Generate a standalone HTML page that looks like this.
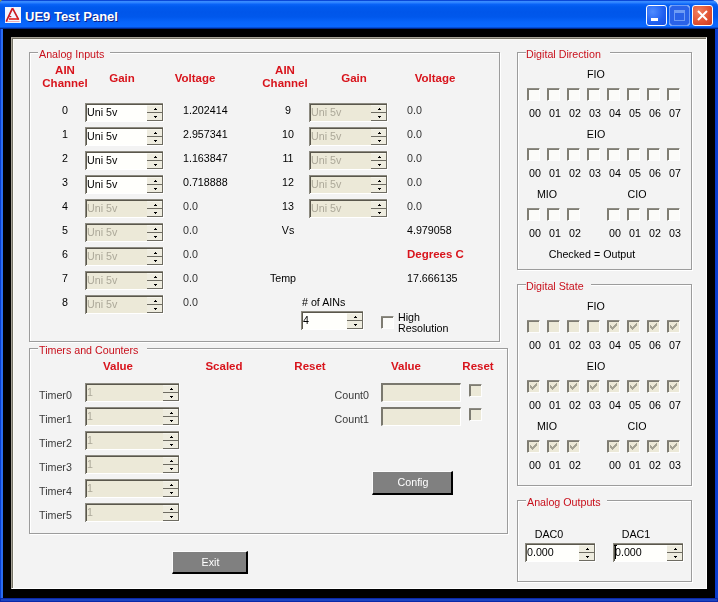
<!DOCTYPE html><html><head><meta charset="utf-8"><title>UE9 Test Panel</title><style>
*{margin:0;padding:0;box-sizing:border-box}
html,body{width:718px;height:602px;overflow:hidden;background:#e4e4f4}
body{position:relative;font-family:"Liberation Sans", sans-serif;font-size:10.7px;color:#000}
div{position:absolute;white-space:nowrap}
.t,.h,.gt,.sv,.btn{will-change:transform}

.t{line-height:13px}
.h{line-height:13px;font-weight:bold;font-size:11.5px;color:#d8141c}
.gt{line-height:13px;color:#c8101c;background:#f3f3f3;padding:0 1px}
.gg{border:1px solid #9c9c9c}
.gw{border:1px solid #ffffff}
.sp{background:#fff;border-top:1px solid #8a8a80;border-left:1px solid #8a8a80;border-bottom:1px solid #fff;border-right:1px solid #fff}
.sp::before{content:"";position:absolute;left:0;top:0;right:0;bottom:0;border-top:1px solid #555248;border-left:1px solid #555248;border-bottom:1px solid #e8e6dc}
.sp.dis{background:#ece9d8}
.sv{line-height:15px}
.sp.dis .sv{color:#aca899}
.su,.sd{right:0;background:#ecebdc;border-bottom:1px solid #6e6c62;border-right:1px solid #6e6c62}
.su{top:1px;height:8px}
.sd{top:9px;height:8px}
.au,.ad{position:absolute;left:6px;width:0;height:0;border-left:2px solid transparent;border-right:2px solid transparent}
.au{top:2px;border-bottom:2px solid #000}
.ad{top:3px;border-top:2px solid #000}
.ed{background:#ece9d8;border-top:2px solid #7a786e;border-left:2px solid #7a786e;border-bottom:1px solid #fff;border-right:1px solid #fff}
.cb{width:13px;height:13px;background:#fbfbf9;border-top:1px solid #8e8c84;border-left:1px solid #8e8c84;border-bottom:1px solid #fdfdfd;border-right:1px solid #fdfdfd}
.cb::before{content:"";position:absolute;left:-1px;top:-1px;width:12px;height:12px;border-top:2px solid #7e7c72;border-left:2px solid #7e7c72;box-sizing:border-box}
.cb::after{content:"";position:absolute;left:-1px;top:-1px;width:12px;height:1px;background:#8e8c84}
.cb.dis{background:#ece9d8}
.cb svg{position:absolute;left:-1px;top:-1px}
.btn{background:#808080;color:#fff;text-align:center;border-right:2px solid #000;border-bottom:2px solid #000;border-top:1px solid #fcfcfc;border-left:1px solid #fcfcfc;padding-left:2px}
</style></head><body>
<div style="left:0;top:0;width:5px;height:2px;background:#8a9a50"></div>
<div style="left:0;top:0;width:718px;height:602px;background:#0a3fd0;border-radius:4px 7px 0 0"></div>
<div style="left:1px;top:29px;width:2px;height:572px;background:#2a6cf0"></div>
<div style="left:715px;top:29px;width:2px;height:572px;background:#0a3ccc"></div>
<div style="left:0;top:598px;width:718px;height:4px;background:#0a28a8"></div>
<div style="left:1px;top:599px;width:716px;height:2px;background:#1c44c0"></div>
<div style="left:0;top:0;width:718px;height:29px;border-radius:4px 7px 0 0;background:linear-gradient(#0a48d8 0px,#0a48d8 1px,#3d8fff 1px,#2a80ff 3px,#0a64f8 4px,#005aee 7px,#0056ea 12px,#0058ec 17px,#0864fa 22px,#0a68ff 27px,#0038b0 28px,#001a70 29px)"></div>
<div style="left:3px;top:29px;width:712px;height:569px;background:#000"></div>
<div style="left:11px;top:37px;width:696px;height:552px;background:#f3f3f3;border-top:1px solid #a8a498;border-left:1px solid #a8a498;border-right:1px solid #fff;border-bottom:1px solid #fff"></div>
<div style="left:12px;top:38px;width:694px;height:550px;border-top:1px solid #747266;border-left:1px solid #747266"></div>
<div style="left:13px;top:39px;width:693px;height:549px;border-top:1px solid #fcfcf8;border-left:1px solid #fcfcf8"></div>
<div style="left:5px;top:7px;width:16px;height:16px;background:#f2f6ff"><svg width="16" height="16" viewBox="0 0 16 16" style="position:absolute;left:0;top:0"><path d="M7.5 1.2 L1.2 14.6 M7.5 1.2 L13.6 12.6" stroke="#cc1a22" stroke-width="1.7" fill="none"/><path d="M4 11.2 H13.8 V12.8 H4 Z" fill="#dd1f1f"/><path d="M4.3 9.6 H6.3" stroke="#cc1a22" stroke-width="1.2"/><path d="M1 14.5 H14.5" stroke="#e04040" stroke-width="0.8" opacity="0.5"/></svg></div>
<div style="left:25px;top:8px;line-height:17px;font-size:13px;font-weight:bold;color:#fff;text-shadow:1px 1px 0 #0a1e8a">UE9 Test Panel</div>
<div style="left:646px;top:5px;width:21px;height:21px;border:1px solid #fff;border-radius:3px;background:radial-gradient(circle at 30% 30%,#4f8cff,#1f5ff0 60%,#1a4fe0)"><div style="left:4px;top:12px;width:7px;height:3px;background:#fff"></div></div>
<div style="left:669px;top:5px;width:21px;height:21px;border:1px solid #fff;border-radius:3px;background:#2a62e8"><div style="left:4px;top:4px;width:11px;height:11px;border:1px solid #6f9cf5;border-top:3px solid #6f9cf5"></div></div>
<div style="left:669px;top:5px;width:21px;height:21px;border:1px solid #6f9cf5;border-radius:3px"></div>
<div style="left:692px;top:5px;width:21px;height:21px;border:1px solid #fff;border-radius:3px;background:radial-gradient(circle at 30% 30%,#f08060,#e05030 60%,#c83a20)"><svg style="position:absolute;left:3px;top:3px" width="13" height="13"><path d="M2 2 L11 11 M11 2 L2 11" stroke="#fff" stroke-width="2"/></svg></div>
<div class="gw" style="left:30px;top:53px;width:471px;height:290px"></div>
<div class="gg" style="left:29px;top:52px;width:471px;height:290px"></div>
<div class="gt" style="left:38px;top:48px;width:72px;padding-left:1px">Analog Inputs</div>
<div class="h" style="left:25px;top:64px;width:80px;text-align:center">AIN<br>Channel</div>
<div class="h" style="left:62.0px;top:72px;width:120px;text-align:center;">Gain</div>
<div class="h" style="left:135.0px;top:72px;width:120px;text-align:center;">Voltage</div>
<div class="h" style="left:245px;top:64px;width:80px;text-align:center">AIN<br>Channel</div>
<div class="h" style="left:294.0px;top:72px;width:120px;text-align:center;">Gain</div>
<div class="h" style="left:375.0px;top:72px;width:120px;text-align:center;">Voltage</div>
<div class="t" style="left:5.0px;top:104px;width:120px;text-align:center;">0</div>
<div style="left:85px;top:103px;width:79px;height:19px;background:#fffffc"><div style="left:0;top:0;width:79px;height:1px;background:#8c8a80"></div><div style="left:0;top:0;width:1px;height:19px;background:#8c8a80"></div><div style="left:1px;top:1px;width:77px;height:1px;background:#5a574c"></div><div style="left:1px;top:1px;width:1px;height:17px;background:#5a574c"></div><div style="left:1px;top:18px;width:78px;height:1px;background:#fff"></div><div style="left:78px;top:0;width:1px;height:19px;background:#fff"></div><div class="sv" style="left:2px;top:2px;color:#000">Uni 5v</div><div style="left:62px;top:2px;width:16px;height:16px;background:#eeecdf"></div><div style="left:62px;top:9px;width:16px;height:1px;background:#6e6c62"></div><div style="left:62px;top:17px;width:16px;height:1px;background:#6e6c62"></div><div style="left:77px;top:2px;width:1px;height:16px;background:#6e6c62"></div><div style="left:62px;top:2px;width:15px;height:1px;background:#f6f5ec"></div><div style="left:70px;top:5px;width:1px;height:1px;background:#000"></div><div style="left:69px;top:6px;width:3px;height:1px;background:#000"></div><div style="left:69px;top:13px;width:3px;height:1px;background:#000"></div><div style="left:70px;top:14px;width:1px;height:1px;background:#000"></div></div>
<div class="t" style="left:183px;top:104px;color:#000">1.202414</div>
<div class="t" style="left:5.0px;top:128px;width:120px;text-align:center;">1</div>
<div style="left:85px;top:127px;width:79px;height:19px;background:#fffffc"><div style="left:0;top:0;width:79px;height:1px;background:#8c8a80"></div><div style="left:0;top:0;width:1px;height:19px;background:#8c8a80"></div><div style="left:1px;top:1px;width:77px;height:1px;background:#5a574c"></div><div style="left:1px;top:1px;width:1px;height:17px;background:#5a574c"></div><div style="left:1px;top:18px;width:78px;height:1px;background:#fff"></div><div style="left:78px;top:0;width:1px;height:19px;background:#fff"></div><div class="sv" style="left:2px;top:2px;color:#000">Uni 5v</div><div style="left:62px;top:2px;width:16px;height:16px;background:#eeecdf"></div><div style="left:62px;top:9px;width:16px;height:1px;background:#6e6c62"></div><div style="left:62px;top:17px;width:16px;height:1px;background:#6e6c62"></div><div style="left:77px;top:2px;width:1px;height:16px;background:#6e6c62"></div><div style="left:62px;top:2px;width:15px;height:1px;background:#f6f5ec"></div><div style="left:70px;top:5px;width:1px;height:1px;background:#000"></div><div style="left:69px;top:6px;width:3px;height:1px;background:#000"></div><div style="left:69px;top:13px;width:3px;height:1px;background:#000"></div><div style="left:70px;top:14px;width:1px;height:1px;background:#000"></div></div>
<div class="t" style="left:183px;top:128px;color:#000">2.957341</div>
<div class="t" style="left:5.0px;top:152px;width:120px;text-align:center;">2</div>
<div style="left:85px;top:151px;width:79px;height:19px;background:#fffffc"><div style="left:0;top:0;width:79px;height:1px;background:#8c8a80"></div><div style="left:0;top:0;width:1px;height:19px;background:#8c8a80"></div><div style="left:1px;top:1px;width:77px;height:1px;background:#5a574c"></div><div style="left:1px;top:1px;width:1px;height:17px;background:#5a574c"></div><div style="left:1px;top:18px;width:78px;height:1px;background:#fff"></div><div style="left:78px;top:0;width:1px;height:19px;background:#fff"></div><div class="sv" style="left:2px;top:2px;color:#000">Uni 5v</div><div style="left:62px;top:2px;width:16px;height:16px;background:#eeecdf"></div><div style="left:62px;top:9px;width:16px;height:1px;background:#6e6c62"></div><div style="left:62px;top:17px;width:16px;height:1px;background:#6e6c62"></div><div style="left:77px;top:2px;width:1px;height:16px;background:#6e6c62"></div><div style="left:62px;top:2px;width:15px;height:1px;background:#f6f5ec"></div><div style="left:70px;top:5px;width:1px;height:1px;background:#000"></div><div style="left:69px;top:6px;width:3px;height:1px;background:#000"></div><div style="left:69px;top:13px;width:3px;height:1px;background:#000"></div><div style="left:70px;top:14px;width:1px;height:1px;background:#000"></div></div>
<div class="t" style="left:183px;top:152px;color:#000">1.163847</div>
<div class="t" style="left:5.0px;top:176px;width:120px;text-align:center;">3</div>
<div style="left:85px;top:175px;width:79px;height:19px;background:#fffffc"><div style="left:0;top:0;width:79px;height:1px;background:#8c8a80"></div><div style="left:0;top:0;width:1px;height:19px;background:#8c8a80"></div><div style="left:1px;top:1px;width:77px;height:1px;background:#5a574c"></div><div style="left:1px;top:1px;width:1px;height:17px;background:#5a574c"></div><div style="left:1px;top:18px;width:78px;height:1px;background:#fff"></div><div style="left:78px;top:0;width:1px;height:19px;background:#fff"></div><div class="sv" style="left:2px;top:2px;color:#000">Uni 5v</div><div style="left:62px;top:2px;width:16px;height:16px;background:#eeecdf"></div><div style="left:62px;top:9px;width:16px;height:1px;background:#6e6c62"></div><div style="left:62px;top:17px;width:16px;height:1px;background:#6e6c62"></div><div style="left:77px;top:2px;width:1px;height:16px;background:#6e6c62"></div><div style="left:62px;top:2px;width:15px;height:1px;background:#f6f5ec"></div><div style="left:70px;top:5px;width:1px;height:1px;background:#000"></div><div style="left:69px;top:6px;width:3px;height:1px;background:#000"></div><div style="left:69px;top:13px;width:3px;height:1px;background:#000"></div><div style="left:70px;top:14px;width:1px;height:1px;background:#000"></div></div>
<div class="t" style="left:183px;top:176px;color:#000">0.718888</div>
<div class="t" style="left:5.0px;top:200px;width:120px;text-align:center;">4</div>
<div style="left:85px;top:199px;width:79px;height:19px;background:#ece9d8"><div style="left:0;top:0;width:79px;height:1px;background:#8c8a80"></div><div style="left:0;top:0;width:1px;height:19px;background:#8c8a80"></div><div style="left:1px;top:1px;width:77px;height:1px;background:#5a574c"></div><div style="left:1px;top:1px;width:1px;height:17px;background:#5a574c"></div><div style="left:1px;top:18px;width:78px;height:1px;background:#fff"></div><div style="left:78px;top:0;width:1px;height:19px;background:#fff"></div><div class="sv" style="left:2px;top:2px;color:#aca899">Uni 5v</div><div style="left:62px;top:2px;width:16px;height:16px;background:#eeecdf"></div><div style="left:62px;top:9px;width:16px;height:1px;background:#6e6c62"></div><div style="left:62px;top:17px;width:16px;height:1px;background:#6e6c62"></div><div style="left:77px;top:2px;width:1px;height:16px;background:#6e6c62"></div><div style="left:62px;top:2px;width:15px;height:1px;background:#f6f5ec"></div><div style="left:70px;top:5px;width:1px;height:1px;background:#000"></div><div style="left:69px;top:6px;width:3px;height:1px;background:#000"></div><div style="left:69px;top:13px;width:3px;height:1px;background:#000"></div><div style="left:70px;top:14px;width:1px;height:1px;background:#000"></div></div>
<div class="t" style="left:183px;top:200px;color:#333">0.0</div>
<div class="t" style="left:5.0px;top:224px;width:120px;text-align:center;">5</div>
<div style="left:85px;top:223px;width:79px;height:19px;background:#ece9d8"><div style="left:0;top:0;width:79px;height:1px;background:#8c8a80"></div><div style="left:0;top:0;width:1px;height:19px;background:#8c8a80"></div><div style="left:1px;top:1px;width:77px;height:1px;background:#5a574c"></div><div style="left:1px;top:1px;width:1px;height:17px;background:#5a574c"></div><div style="left:1px;top:18px;width:78px;height:1px;background:#fff"></div><div style="left:78px;top:0;width:1px;height:19px;background:#fff"></div><div class="sv" style="left:2px;top:2px;color:#aca899">Uni 5v</div><div style="left:62px;top:2px;width:16px;height:16px;background:#eeecdf"></div><div style="left:62px;top:9px;width:16px;height:1px;background:#6e6c62"></div><div style="left:62px;top:17px;width:16px;height:1px;background:#6e6c62"></div><div style="left:77px;top:2px;width:1px;height:16px;background:#6e6c62"></div><div style="left:62px;top:2px;width:15px;height:1px;background:#f6f5ec"></div><div style="left:70px;top:5px;width:1px;height:1px;background:#000"></div><div style="left:69px;top:6px;width:3px;height:1px;background:#000"></div><div style="left:69px;top:13px;width:3px;height:1px;background:#000"></div><div style="left:70px;top:14px;width:1px;height:1px;background:#000"></div></div>
<div class="t" style="left:183px;top:224px;color:#333">0.0</div>
<div class="t" style="left:5.0px;top:248px;width:120px;text-align:center;">6</div>
<div style="left:85px;top:247px;width:79px;height:19px;background:#ece9d8"><div style="left:0;top:0;width:79px;height:1px;background:#8c8a80"></div><div style="left:0;top:0;width:1px;height:19px;background:#8c8a80"></div><div style="left:1px;top:1px;width:77px;height:1px;background:#5a574c"></div><div style="left:1px;top:1px;width:1px;height:17px;background:#5a574c"></div><div style="left:1px;top:18px;width:78px;height:1px;background:#fff"></div><div style="left:78px;top:0;width:1px;height:19px;background:#fff"></div><div class="sv" style="left:2px;top:2px;color:#aca899">Uni 5v</div><div style="left:62px;top:2px;width:16px;height:16px;background:#eeecdf"></div><div style="left:62px;top:9px;width:16px;height:1px;background:#6e6c62"></div><div style="left:62px;top:17px;width:16px;height:1px;background:#6e6c62"></div><div style="left:77px;top:2px;width:1px;height:16px;background:#6e6c62"></div><div style="left:62px;top:2px;width:15px;height:1px;background:#f6f5ec"></div><div style="left:70px;top:5px;width:1px;height:1px;background:#000"></div><div style="left:69px;top:6px;width:3px;height:1px;background:#000"></div><div style="left:69px;top:13px;width:3px;height:1px;background:#000"></div><div style="left:70px;top:14px;width:1px;height:1px;background:#000"></div></div>
<div class="t" style="left:183px;top:248px;color:#333">0.0</div>
<div class="t" style="left:5.0px;top:272px;width:120px;text-align:center;">7</div>
<div style="left:85px;top:271px;width:79px;height:19px;background:#ece9d8"><div style="left:0;top:0;width:79px;height:1px;background:#8c8a80"></div><div style="left:0;top:0;width:1px;height:19px;background:#8c8a80"></div><div style="left:1px;top:1px;width:77px;height:1px;background:#5a574c"></div><div style="left:1px;top:1px;width:1px;height:17px;background:#5a574c"></div><div style="left:1px;top:18px;width:78px;height:1px;background:#fff"></div><div style="left:78px;top:0;width:1px;height:19px;background:#fff"></div><div class="sv" style="left:2px;top:2px;color:#aca899">Uni 5v</div><div style="left:62px;top:2px;width:16px;height:16px;background:#eeecdf"></div><div style="left:62px;top:9px;width:16px;height:1px;background:#6e6c62"></div><div style="left:62px;top:17px;width:16px;height:1px;background:#6e6c62"></div><div style="left:77px;top:2px;width:1px;height:16px;background:#6e6c62"></div><div style="left:62px;top:2px;width:15px;height:1px;background:#f6f5ec"></div><div style="left:70px;top:5px;width:1px;height:1px;background:#000"></div><div style="left:69px;top:6px;width:3px;height:1px;background:#000"></div><div style="left:69px;top:13px;width:3px;height:1px;background:#000"></div><div style="left:70px;top:14px;width:1px;height:1px;background:#000"></div></div>
<div class="t" style="left:183px;top:272px;color:#333">0.0</div>
<div class="t" style="left:5.0px;top:296px;width:120px;text-align:center;">8</div>
<div style="left:85px;top:295px;width:79px;height:19px;background:#ece9d8"><div style="left:0;top:0;width:79px;height:1px;background:#8c8a80"></div><div style="left:0;top:0;width:1px;height:19px;background:#8c8a80"></div><div style="left:1px;top:1px;width:77px;height:1px;background:#5a574c"></div><div style="left:1px;top:1px;width:1px;height:17px;background:#5a574c"></div><div style="left:1px;top:18px;width:78px;height:1px;background:#fff"></div><div style="left:78px;top:0;width:1px;height:19px;background:#fff"></div><div class="sv" style="left:2px;top:2px;color:#aca899">Uni 5v</div><div style="left:62px;top:2px;width:16px;height:16px;background:#eeecdf"></div><div style="left:62px;top:9px;width:16px;height:1px;background:#6e6c62"></div><div style="left:62px;top:17px;width:16px;height:1px;background:#6e6c62"></div><div style="left:77px;top:2px;width:1px;height:16px;background:#6e6c62"></div><div style="left:62px;top:2px;width:15px;height:1px;background:#f6f5ec"></div><div style="left:70px;top:5px;width:1px;height:1px;background:#000"></div><div style="left:69px;top:6px;width:3px;height:1px;background:#000"></div><div style="left:69px;top:13px;width:3px;height:1px;background:#000"></div><div style="left:70px;top:14px;width:1px;height:1px;background:#000"></div></div>
<div class="t" style="left:183px;top:296px;color:#333">0.0</div>
<div class="t" style="left:228.0px;top:104px;width:120px;text-align:center;">9</div>
<div style="left:309px;top:103px;width:79px;height:19px;background:#ece9d8"><div style="left:0;top:0;width:79px;height:1px;background:#8c8a80"></div><div style="left:0;top:0;width:1px;height:19px;background:#8c8a80"></div><div style="left:1px;top:1px;width:77px;height:1px;background:#5a574c"></div><div style="left:1px;top:1px;width:1px;height:17px;background:#5a574c"></div><div style="left:1px;top:18px;width:78px;height:1px;background:#fff"></div><div style="left:78px;top:0;width:1px;height:19px;background:#fff"></div><div class="sv" style="left:2px;top:2px;color:#aca899">Uni 5v</div><div style="left:62px;top:2px;width:16px;height:16px;background:#eeecdf"></div><div style="left:62px;top:9px;width:16px;height:1px;background:#6e6c62"></div><div style="left:62px;top:17px;width:16px;height:1px;background:#6e6c62"></div><div style="left:77px;top:2px;width:1px;height:16px;background:#6e6c62"></div><div style="left:62px;top:2px;width:15px;height:1px;background:#f6f5ec"></div><div style="left:70px;top:5px;width:1px;height:1px;background:#000"></div><div style="left:69px;top:6px;width:3px;height:1px;background:#000"></div><div style="left:69px;top:13px;width:3px;height:1px;background:#000"></div><div style="left:70px;top:14px;width:1px;height:1px;background:#000"></div></div>
<div class="t" style="left:407px;top:104px;color:#333">0.0</div>
<div class="t" style="left:228.0px;top:128px;width:120px;text-align:center;">10</div>
<div style="left:309px;top:127px;width:79px;height:19px;background:#ece9d8"><div style="left:0;top:0;width:79px;height:1px;background:#8c8a80"></div><div style="left:0;top:0;width:1px;height:19px;background:#8c8a80"></div><div style="left:1px;top:1px;width:77px;height:1px;background:#5a574c"></div><div style="left:1px;top:1px;width:1px;height:17px;background:#5a574c"></div><div style="left:1px;top:18px;width:78px;height:1px;background:#fff"></div><div style="left:78px;top:0;width:1px;height:19px;background:#fff"></div><div class="sv" style="left:2px;top:2px;color:#aca899">Uni 5v</div><div style="left:62px;top:2px;width:16px;height:16px;background:#eeecdf"></div><div style="left:62px;top:9px;width:16px;height:1px;background:#6e6c62"></div><div style="left:62px;top:17px;width:16px;height:1px;background:#6e6c62"></div><div style="left:77px;top:2px;width:1px;height:16px;background:#6e6c62"></div><div style="left:62px;top:2px;width:15px;height:1px;background:#f6f5ec"></div><div style="left:70px;top:5px;width:1px;height:1px;background:#000"></div><div style="left:69px;top:6px;width:3px;height:1px;background:#000"></div><div style="left:69px;top:13px;width:3px;height:1px;background:#000"></div><div style="left:70px;top:14px;width:1px;height:1px;background:#000"></div></div>
<div class="t" style="left:407px;top:128px;color:#333">0.0</div>
<div class="t" style="left:228.0px;top:152px;width:120px;text-align:center;">11</div>
<div style="left:309px;top:151px;width:79px;height:19px;background:#ece9d8"><div style="left:0;top:0;width:79px;height:1px;background:#8c8a80"></div><div style="left:0;top:0;width:1px;height:19px;background:#8c8a80"></div><div style="left:1px;top:1px;width:77px;height:1px;background:#5a574c"></div><div style="left:1px;top:1px;width:1px;height:17px;background:#5a574c"></div><div style="left:1px;top:18px;width:78px;height:1px;background:#fff"></div><div style="left:78px;top:0;width:1px;height:19px;background:#fff"></div><div class="sv" style="left:2px;top:2px;color:#aca899">Uni 5v</div><div style="left:62px;top:2px;width:16px;height:16px;background:#eeecdf"></div><div style="left:62px;top:9px;width:16px;height:1px;background:#6e6c62"></div><div style="left:62px;top:17px;width:16px;height:1px;background:#6e6c62"></div><div style="left:77px;top:2px;width:1px;height:16px;background:#6e6c62"></div><div style="left:62px;top:2px;width:15px;height:1px;background:#f6f5ec"></div><div style="left:70px;top:5px;width:1px;height:1px;background:#000"></div><div style="left:69px;top:6px;width:3px;height:1px;background:#000"></div><div style="left:69px;top:13px;width:3px;height:1px;background:#000"></div><div style="left:70px;top:14px;width:1px;height:1px;background:#000"></div></div>
<div class="t" style="left:407px;top:152px;color:#333">0.0</div>
<div class="t" style="left:228.0px;top:176px;width:120px;text-align:center;">12</div>
<div style="left:309px;top:175px;width:79px;height:19px;background:#ece9d8"><div style="left:0;top:0;width:79px;height:1px;background:#8c8a80"></div><div style="left:0;top:0;width:1px;height:19px;background:#8c8a80"></div><div style="left:1px;top:1px;width:77px;height:1px;background:#5a574c"></div><div style="left:1px;top:1px;width:1px;height:17px;background:#5a574c"></div><div style="left:1px;top:18px;width:78px;height:1px;background:#fff"></div><div style="left:78px;top:0;width:1px;height:19px;background:#fff"></div><div class="sv" style="left:2px;top:2px;color:#aca899">Uni 5v</div><div style="left:62px;top:2px;width:16px;height:16px;background:#eeecdf"></div><div style="left:62px;top:9px;width:16px;height:1px;background:#6e6c62"></div><div style="left:62px;top:17px;width:16px;height:1px;background:#6e6c62"></div><div style="left:77px;top:2px;width:1px;height:16px;background:#6e6c62"></div><div style="left:62px;top:2px;width:15px;height:1px;background:#f6f5ec"></div><div style="left:70px;top:5px;width:1px;height:1px;background:#000"></div><div style="left:69px;top:6px;width:3px;height:1px;background:#000"></div><div style="left:69px;top:13px;width:3px;height:1px;background:#000"></div><div style="left:70px;top:14px;width:1px;height:1px;background:#000"></div></div>
<div class="t" style="left:407px;top:176px;color:#333">0.0</div>
<div class="t" style="left:228.0px;top:200px;width:120px;text-align:center;">13</div>
<div style="left:309px;top:199px;width:79px;height:19px;background:#ece9d8"><div style="left:0;top:0;width:79px;height:1px;background:#8c8a80"></div><div style="left:0;top:0;width:1px;height:19px;background:#8c8a80"></div><div style="left:1px;top:1px;width:77px;height:1px;background:#5a574c"></div><div style="left:1px;top:1px;width:1px;height:17px;background:#5a574c"></div><div style="left:1px;top:18px;width:78px;height:1px;background:#fff"></div><div style="left:78px;top:0;width:1px;height:19px;background:#fff"></div><div class="sv" style="left:2px;top:2px;color:#aca899">Uni 5v</div><div style="left:62px;top:2px;width:16px;height:16px;background:#eeecdf"></div><div style="left:62px;top:9px;width:16px;height:1px;background:#6e6c62"></div><div style="left:62px;top:17px;width:16px;height:1px;background:#6e6c62"></div><div style="left:77px;top:2px;width:1px;height:16px;background:#6e6c62"></div><div style="left:62px;top:2px;width:15px;height:1px;background:#f6f5ec"></div><div style="left:70px;top:5px;width:1px;height:1px;background:#000"></div><div style="left:69px;top:6px;width:3px;height:1px;background:#000"></div><div style="left:69px;top:13px;width:3px;height:1px;background:#000"></div><div style="left:70px;top:14px;width:1px;height:1px;background:#000"></div></div>
<div class="t" style="left:407px;top:200px;color:#333">0.0</div>
<div class="t" style="left:228.0px;top:224px;width:120px;text-align:center;">Vs</div>
<div class="t" style="left:407px;top:224px;">4.979058</div>
<div class="h" style="left:407px;top:248px;">Degrees C</div>
<div class="t" style="left:223.0px;top:272px;width:120px;text-align:center;">Temp</div>
<div class="t" style="left:407px;top:272px;">17.666135</div>
<div class="t" style="left:302px;top:296px;"># of AINs</div>
<div style="left:301px;top:311px;width:63px;height:19px;background:#fffffc"><div style="left:0;top:0;width:63px;height:1px;background:#8c8a80"></div><div style="left:0;top:0;width:1px;height:19px;background:#8c8a80"></div><div style="left:1px;top:1px;width:61px;height:1px;background:#5a574c"></div><div style="left:1px;top:1px;width:1px;height:17px;background:#5a574c"></div><div style="left:1px;top:18px;width:62px;height:1px;background:#fff"></div><div style="left:62px;top:0;width:1px;height:19px;background:#fff"></div><div class="sv" style="left:2px;top:2px;color:#000">4</div><div style="left:46px;top:2px;width:16px;height:16px;background:#eeecdf"></div><div style="left:46px;top:9px;width:16px;height:1px;background:#6e6c62"></div><div style="left:46px;top:17px;width:16px;height:1px;background:#6e6c62"></div><div style="left:61px;top:2px;width:1px;height:16px;background:#6e6c62"></div><div style="left:46px;top:2px;width:15px;height:1px;background:#f6f5ec"></div><div style="left:54px;top:5px;width:1px;height:1px;background:#000"></div><div style="left:53px;top:6px;width:3px;height:1px;background:#000"></div><div style="left:53px;top:13px;width:3px;height:1px;background:#000"></div><div style="left:54px;top:14px;width:1px;height:1px;background:#000"></div></div>
<div class="cb" style="left:381px;top:316px"></div>
<div class="t" style="left:398px;top:312px;line-height:11px">High<br>Resolution</div>
<div class="gw" style="left:30px;top:349px;width:479px;height:186px"></div>
<div class="gg" style="left:29px;top:348px;width:479px;height:186px"></div>
<div class="gt" style="left:38px;top:344px;width:109px;padding-left:1px">Timers and Counters</div>
<div class="h" style="left:58.0px;top:360px;width:120px;text-align:center;">Value</div>
<div class="h" style="left:164.0px;top:360px;width:120px;text-align:center;">Scaled</div>
<div class="h" style="left:250.0px;top:360px;width:120px;text-align:center;">Reset</div>
<div class="h" style="left:346.0px;top:360px;width:120px;text-align:center;">Value</div>
<div class="h" style="left:418.0px;top:360px;width:120px;text-align:center;">Reset</div>
<div class="t" style="left:39px;top:389px;color:#3a3a3a">Timer0</div>
<div style="left:85px;top:383px;width:95px;height:19px;background:#ece9d8"><div style="left:0;top:0;width:95px;height:1px;background:#8c8a80"></div><div style="left:0;top:0;width:1px;height:19px;background:#8c8a80"></div><div style="left:1px;top:1px;width:93px;height:1px;background:#5a574c"></div><div style="left:1px;top:1px;width:1px;height:17px;background:#5a574c"></div><div style="left:1px;top:18px;width:94px;height:1px;background:#fff"></div><div style="left:94px;top:0;width:1px;height:19px;background:#fff"></div><div class="sv" style="left:2px;top:2px;color:#aca899">1</div><div style="left:78px;top:2px;width:16px;height:16px;background:#eeecdf"></div><div style="left:78px;top:9px;width:16px;height:1px;background:#6e6c62"></div><div style="left:78px;top:17px;width:16px;height:1px;background:#6e6c62"></div><div style="left:93px;top:2px;width:1px;height:16px;background:#6e6c62"></div><div style="left:78px;top:2px;width:15px;height:1px;background:#f6f5ec"></div><div style="left:86px;top:5px;width:1px;height:1px;background:#000"></div><div style="left:85px;top:6px;width:3px;height:1px;background:#000"></div><div style="left:85px;top:13px;width:3px;height:1px;background:#000"></div><div style="left:86px;top:14px;width:1px;height:1px;background:#000"></div></div>
<div class="t" style="left:39px;top:413px;color:#3a3a3a">Timer1</div>
<div style="left:85px;top:407px;width:95px;height:19px;background:#ece9d8"><div style="left:0;top:0;width:95px;height:1px;background:#8c8a80"></div><div style="left:0;top:0;width:1px;height:19px;background:#8c8a80"></div><div style="left:1px;top:1px;width:93px;height:1px;background:#5a574c"></div><div style="left:1px;top:1px;width:1px;height:17px;background:#5a574c"></div><div style="left:1px;top:18px;width:94px;height:1px;background:#fff"></div><div style="left:94px;top:0;width:1px;height:19px;background:#fff"></div><div class="sv" style="left:2px;top:2px;color:#aca899">1</div><div style="left:78px;top:2px;width:16px;height:16px;background:#eeecdf"></div><div style="left:78px;top:9px;width:16px;height:1px;background:#6e6c62"></div><div style="left:78px;top:17px;width:16px;height:1px;background:#6e6c62"></div><div style="left:93px;top:2px;width:1px;height:16px;background:#6e6c62"></div><div style="left:78px;top:2px;width:15px;height:1px;background:#f6f5ec"></div><div style="left:86px;top:5px;width:1px;height:1px;background:#000"></div><div style="left:85px;top:6px;width:3px;height:1px;background:#000"></div><div style="left:85px;top:13px;width:3px;height:1px;background:#000"></div><div style="left:86px;top:14px;width:1px;height:1px;background:#000"></div></div>
<div class="t" style="left:39px;top:437px;color:#3a3a3a">Timer2</div>
<div style="left:85px;top:431px;width:95px;height:19px;background:#ece9d8"><div style="left:0;top:0;width:95px;height:1px;background:#8c8a80"></div><div style="left:0;top:0;width:1px;height:19px;background:#8c8a80"></div><div style="left:1px;top:1px;width:93px;height:1px;background:#5a574c"></div><div style="left:1px;top:1px;width:1px;height:17px;background:#5a574c"></div><div style="left:1px;top:18px;width:94px;height:1px;background:#fff"></div><div style="left:94px;top:0;width:1px;height:19px;background:#fff"></div><div class="sv" style="left:2px;top:2px;color:#aca899">1</div><div style="left:78px;top:2px;width:16px;height:16px;background:#eeecdf"></div><div style="left:78px;top:9px;width:16px;height:1px;background:#6e6c62"></div><div style="left:78px;top:17px;width:16px;height:1px;background:#6e6c62"></div><div style="left:93px;top:2px;width:1px;height:16px;background:#6e6c62"></div><div style="left:78px;top:2px;width:15px;height:1px;background:#f6f5ec"></div><div style="left:86px;top:5px;width:1px;height:1px;background:#000"></div><div style="left:85px;top:6px;width:3px;height:1px;background:#000"></div><div style="left:85px;top:13px;width:3px;height:1px;background:#000"></div><div style="left:86px;top:14px;width:1px;height:1px;background:#000"></div></div>
<div class="t" style="left:39px;top:461px;color:#3a3a3a">Timer3</div>
<div style="left:85px;top:455px;width:95px;height:19px;background:#ece9d8"><div style="left:0;top:0;width:95px;height:1px;background:#8c8a80"></div><div style="left:0;top:0;width:1px;height:19px;background:#8c8a80"></div><div style="left:1px;top:1px;width:93px;height:1px;background:#5a574c"></div><div style="left:1px;top:1px;width:1px;height:17px;background:#5a574c"></div><div style="left:1px;top:18px;width:94px;height:1px;background:#fff"></div><div style="left:94px;top:0;width:1px;height:19px;background:#fff"></div><div class="sv" style="left:2px;top:2px;color:#aca899">1</div><div style="left:78px;top:2px;width:16px;height:16px;background:#eeecdf"></div><div style="left:78px;top:9px;width:16px;height:1px;background:#6e6c62"></div><div style="left:78px;top:17px;width:16px;height:1px;background:#6e6c62"></div><div style="left:93px;top:2px;width:1px;height:16px;background:#6e6c62"></div><div style="left:78px;top:2px;width:15px;height:1px;background:#f6f5ec"></div><div style="left:86px;top:5px;width:1px;height:1px;background:#000"></div><div style="left:85px;top:6px;width:3px;height:1px;background:#000"></div><div style="left:85px;top:13px;width:3px;height:1px;background:#000"></div><div style="left:86px;top:14px;width:1px;height:1px;background:#000"></div></div>
<div class="t" style="left:39px;top:485px;color:#3a3a3a">Timer4</div>
<div style="left:85px;top:479px;width:95px;height:19px;background:#ece9d8"><div style="left:0;top:0;width:95px;height:1px;background:#8c8a80"></div><div style="left:0;top:0;width:1px;height:19px;background:#8c8a80"></div><div style="left:1px;top:1px;width:93px;height:1px;background:#5a574c"></div><div style="left:1px;top:1px;width:1px;height:17px;background:#5a574c"></div><div style="left:1px;top:18px;width:94px;height:1px;background:#fff"></div><div style="left:94px;top:0;width:1px;height:19px;background:#fff"></div><div class="sv" style="left:2px;top:2px;color:#aca899">1</div><div style="left:78px;top:2px;width:16px;height:16px;background:#eeecdf"></div><div style="left:78px;top:9px;width:16px;height:1px;background:#6e6c62"></div><div style="left:78px;top:17px;width:16px;height:1px;background:#6e6c62"></div><div style="left:93px;top:2px;width:1px;height:16px;background:#6e6c62"></div><div style="left:78px;top:2px;width:15px;height:1px;background:#f6f5ec"></div><div style="left:86px;top:5px;width:1px;height:1px;background:#000"></div><div style="left:85px;top:6px;width:3px;height:1px;background:#000"></div><div style="left:85px;top:13px;width:3px;height:1px;background:#000"></div><div style="left:86px;top:14px;width:1px;height:1px;background:#000"></div></div>
<div class="t" style="left:39px;top:509px;color:#3a3a3a">Timer5</div>
<div style="left:85px;top:503px;width:95px;height:19px;background:#ece9d8"><div style="left:0;top:0;width:95px;height:1px;background:#8c8a80"></div><div style="left:0;top:0;width:1px;height:19px;background:#8c8a80"></div><div style="left:1px;top:1px;width:93px;height:1px;background:#5a574c"></div><div style="left:1px;top:1px;width:1px;height:17px;background:#5a574c"></div><div style="left:1px;top:18px;width:94px;height:1px;background:#fff"></div><div style="left:94px;top:0;width:1px;height:19px;background:#fff"></div><div class="sv" style="left:2px;top:2px;color:#aca899">1</div><div style="left:78px;top:2px;width:16px;height:16px;background:#eeecdf"></div><div style="left:78px;top:9px;width:16px;height:1px;background:#6e6c62"></div><div style="left:78px;top:17px;width:16px;height:1px;background:#6e6c62"></div><div style="left:93px;top:2px;width:1px;height:16px;background:#6e6c62"></div><div style="left:78px;top:2px;width:15px;height:1px;background:#f6f5ec"></div><div style="left:86px;top:5px;width:1px;height:1px;background:#000"></div><div style="left:85px;top:6px;width:3px;height:1px;background:#000"></div><div style="left:85px;top:13px;width:3px;height:1px;background:#000"></div><div style="left:86px;top:14px;width:1px;height:1px;background:#000"></div></div>
<div class="t" style="left:249px;top:389px;width:120px;text-align:right;color:#3a3a3a">Count0</div>
<div class="ed" style="left:381px;top:383px;width:80px;height:19px"></div>
<div class="cb dis" style="left:469px;top:384px"></div>
<div class="t" style="left:249px;top:413px;width:120px;text-align:right;color:#3a3a3a">Count1</div>
<div class="ed" style="left:381px;top:407px;width:80px;height:19px"></div>
<div class="cb dis" style="left:469px;top:408px"></div>
<div class="btn" style="left:372px;top:471px;width:81px;height:24px;line-height:21px">Config</div>
<div class="btn" style="left:172px;top:551px;width:76px;height:23px;line-height:20px">Exit</div>
<div class="gw" style="left:518px;top:53px;width:175px;height:218px"></div>
<div class="gg" style="left:517px;top:52px;width:175px;height:218px"></div>
<div class="gt" style="left:526px;top:48px;width:84px;padding-left:0px">Digital Direction</div>
<div class="t" style="left:536.0px;top:68px;width:120px;text-align:center;">FIO</div>
<div class="cb" style="left:527px;top:88px"></div>
<div class="t" style="left:474.5px;top:107px;width:120px;text-align:center;">00</div>
<div class="cb" style="left:547px;top:88px"></div>
<div class="t" style="left:494.5px;top:107px;width:120px;text-align:center;">01</div>
<div class="cb" style="left:567px;top:88px"></div>
<div class="t" style="left:514.5px;top:107px;width:120px;text-align:center;">02</div>
<div class="cb" style="left:587px;top:88px"></div>
<div class="t" style="left:534.5px;top:107px;width:120px;text-align:center;">03</div>
<div class="cb" style="left:607px;top:88px"></div>
<div class="t" style="left:554.5px;top:107px;width:120px;text-align:center;">04</div>
<div class="cb" style="left:627px;top:88px"></div>
<div class="t" style="left:574.5px;top:107px;width:120px;text-align:center;">05</div>
<div class="cb" style="left:647px;top:88px"></div>
<div class="t" style="left:594.5px;top:107px;width:120px;text-align:center;">06</div>
<div class="cb" style="left:667px;top:88px"></div>
<div class="t" style="left:614.5px;top:107px;width:120px;text-align:center;">07</div>
<div class="t" style="left:536.0px;top:128px;width:120px;text-align:center;">EIO</div>
<div class="cb" style="left:527px;top:148px"></div>
<div class="t" style="left:474.5px;top:167px;width:120px;text-align:center;">00</div>
<div class="cb" style="left:547px;top:148px"></div>
<div class="t" style="left:494.5px;top:167px;width:120px;text-align:center;">01</div>
<div class="cb" style="left:567px;top:148px"></div>
<div class="t" style="left:514.5px;top:167px;width:120px;text-align:center;">02</div>
<div class="cb" style="left:587px;top:148px"></div>
<div class="t" style="left:534.5px;top:167px;width:120px;text-align:center;">03</div>
<div class="cb" style="left:607px;top:148px"></div>
<div class="t" style="left:554.5px;top:167px;width:120px;text-align:center;">04</div>
<div class="cb" style="left:627px;top:148px"></div>
<div class="t" style="left:574.5px;top:167px;width:120px;text-align:center;">05</div>
<div class="cb" style="left:647px;top:148px"></div>
<div class="t" style="left:594.5px;top:167px;width:120px;text-align:center;">06</div>
<div class="cb" style="left:667px;top:148px"></div>
<div class="t" style="left:614.5px;top:167px;width:120px;text-align:center;">07</div>
<div class="t" style="left:487.0px;top:188px;width:120px;text-align:center;">MIO</div>
<div class="t" style="left:577.0px;top:188px;width:120px;text-align:center;">CIO</div>
<div class="cb" style="left:527px;top:208px"></div>
<div class="t" style="left:474.5px;top:227px;width:120px;text-align:center;">00</div>
<div class="cb" style="left:547px;top:208px"></div>
<div class="t" style="left:494.5px;top:227px;width:120px;text-align:center;">01</div>
<div class="cb" style="left:567px;top:208px"></div>
<div class="t" style="left:514.5px;top:227px;width:120px;text-align:center;">02</div>
<div class="cb" style="left:607px;top:208px"></div>
<div class="t" style="left:554.5px;top:227px;width:120px;text-align:center;">00</div>
<div class="cb" style="left:627px;top:208px"></div>
<div class="t" style="left:574.5px;top:227px;width:120px;text-align:center;">01</div>
<div class="cb" style="left:647px;top:208px"></div>
<div class="t" style="left:594.5px;top:227px;width:120px;text-align:center;">02</div>
<div class="cb" style="left:667px;top:208px"></div>
<div class="t" style="left:614.5px;top:227px;width:120px;text-align:center;">03</div>
<div class="t" style="left:531.5px;top:248px;width:120px;text-align:center;">Checked = Output</div>
<div class="gw" style="left:518px;top:285px;width:175px;height:202px"></div>
<div class="gg" style="left:517px;top:284px;width:175px;height:202px"></div>
<div class="gt" style="left:526px;top:280px;width:65px;padding-left:0px">Digital State</div>
<div class="t" style="left:536.0px;top:300px;width:120px;text-align:center;">FIO</div>
<div class="cb dis" style="left:527px;top:320px"></div>
<div class="t" style="left:474.5px;top:339px;width:120px;text-align:center;">00</div>
<div class="cb dis" style="left:547px;top:320px"></div>
<div class="t" style="left:494.5px;top:339px;width:120px;text-align:center;">01</div>
<div class="cb dis" style="left:567px;top:320px"></div>
<div class="t" style="left:514.5px;top:339px;width:120px;text-align:center;">02</div>
<div class="cb dis" style="left:587px;top:320px"></div>
<div class="t" style="left:534.5px;top:339px;width:120px;text-align:center;">03</div>
<div class="cb dis" style="left:607px;top:320px"><svg width="13" height="13" viewBox="0 0 13 13"><path d="M9 3h1v1h-1zM8 4h1v1h-1zM9 4h1v1h-1zM3 5h1v1h-1zM7 5h1v1h-1zM8 5h1v1h-1zM9 5h1v1h-1zM3 6h1v1h-1zM4 6h1v1h-1zM6 6h1v1h-1zM7 6h1v1h-1zM8 6h1v1h-1zM3 7h1v1h-1zM4 7h1v1h-1zM5 7h1v1h-1zM6 7h1v1h-1zM7 7h1v1h-1zM4 8h1v1h-1zM5 8h1v1h-1zM6 8h1v1h-1zM5 9h1v1h-1z" fill="#a4a294" shape-rendering="crispEdges"/></svg></div>
<div class="t" style="left:554.5px;top:339px;width:120px;text-align:center;">04</div>
<div class="cb dis" style="left:627px;top:320px"><svg width="13" height="13" viewBox="0 0 13 13"><path d="M9 3h1v1h-1zM8 4h1v1h-1zM9 4h1v1h-1zM3 5h1v1h-1zM7 5h1v1h-1zM8 5h1v1h-1zM9 5h1v1h-1zM3 6h1v1h-1zM4 6h1v1h-1zM6 6h1v1h-1zM7 6h1v1h-1zM8 6h1v1h-1zM3 7h1v1h-1zM4 7h1v1h-1zM5 7h1v1h-1zM6 7h1v1h-1zM7 7h1v1h-1zM4 8h1v1h-1zM5 8h1v1h-1zM6 8h1v1h-1zM5 9h1v1h-1z" fill="#a4a294" shape-rendering="crispEdges"/></svg></div>
<div class="t" style="left:574.5px;top:339px;width:120px;text-align:center;">05</div>
<div class="cb dis" style="left:647px;top:320px"><svg width="13" height="13" viewBox="0 0 13 13"><path d="M9 3h1v1h-1zM8 4h1v1h-1zM9 4h1v1h-1zM3 5h1v1h-1zM7 5h1v1h-1zM8 5h1v1h-1zM9 5h1v1h-1zM3 6h1v1h-1zM4 6h1v1h-1zM6 6h1v1h-1zM7 6h1v1h-1zM8 6h1v1h-1zM3 7h1v1h-1zM4 7h1v1h-1zM5 7h1v1h-1zM6 7h1v1h-1zM7 7h1v1h-1zM4 8h1v1h-1zM5 8h1v1h-1zM6 8h1v1h-1zM5 9h1v1h-1z" fill="#a4a294" shape-rendering="crispEdges"/></svg></div>
<div class="t" style="left:594.5px;top:339px;width:120px;text-align:center;">06</div>
<div class="cb dis" style="left:667px;top:320px"><svg width="13" height="13" viewBox="0 0 13 13"><path d="M9 3h1v1h-1zM8 4h1v1h-1zM9 4h1v1h-1zM3 5h1v1h-1zM7 5h1v1h-1zM8 5h1v1h-1zM9 5h1v1h-1zM3 6h1v1h-1zM4 6h1v1h-1zM6 6h1v1h-1zM7 6h1v1h-1zM8 6h1v1h-1zM3 7h1v1h-1zM4 7h1v1h-1zM5 7h1v1h-1zM6 7h1v1h-1zM7 7h1v1h-1zM4 8h1v1h-1zM5 8h1v1h-1zM6 8h1v1h-1zM5 9h1v1h-1z" fill="#a4a294" shape-rendering="crispEdges"/></svg></div>
<div class="t" style="left:614.5px;top:339px;width:120px;text-align:center;">07</div>
<div class="t" style="left:536.0px;top:360px;width:120px;text-align:center;">EIO</div>
<div class="cb dis" style="left:527px;top:380px"><svg width="13" height="13" viewBox="0 0 13 13"><path d="M9 3h1v1h-1zM8 4h1v1h-1zM9 4h1v1h-1zM3 5h1v1h-1zM7 5h1v1h-1zM8 5h1v1h-1zM9 5h1v1h-1zM3 6h1v1h-1zM4 6h1v1h-1zM6 6h1v1h-1zM7 6h1v1h-1zM8 6h1v1h-1zM3 7h1v1h-1zM4 7h1v1h-1zM5 7h1v1h-1zM6 7h1v1h-1zM7 7h1v1h-1zM4 8h1v1h-1zM5 8h1v1h-1zM6 8h1v1h-1zM5 9h1v1h-1z" fill="#a4a294" shape-rendering="crispEdges"/></svg></div>
<div class="t" style="left:474.5px;top:399px;width:120px;text-align:center;">00</div>
<div class="cb dis" style="left:547px;top:380px"><svg width="13" height="13" viewBox="0 0 13 13"><path d="M9 3h1v1h-1zM8 4h1v1h-1zM9 4h1v1h-1zM3 5h1v1h-1zM7 5h1v1h-1zM8 5h1v1h-1zM9 5h1v1h-1zM3 6h1v1h-1zM4 6h1v1h-1zM6 6h1v1h-1zM7 6h1v1h-1zM8 6h1v1h-1zM3 7h1v1h-1zM4 7h1v1h-1zM5 7h1v1h-1zM6 7h1v1h-1zM7 7h1v1h-1zM4 8h1v1h-1zM5 8h1v1h-1zM6 8h1v1h-1zM5 9h1v1h-1z" fill="#a4a294" shape-rendering="crispEdges"/></svg></div>
<div class="t" style="left:494.5px;top:399px;width:120px;text-align:center;">01</div>
<div class="cb dis" style="left:567px;top:380px"><svg width="13" height="13" viewBox="0 0 13 13"><path d="M9 3h1v1h-1zM8 4h1v1h-1zM9 4h1v1h-1zM3 5h1v1h-1zM7 5h1v1h-1zM8 5h1v1h-1zM9 5h1v1h-1zM3 6h1v1h-1zM4 6h1v1h-1zM6 6h1v1h-1zM7 6h1v1h-1zM8 6h1v1h-1zM3 7h1v1h-1zM4 7h1v1h-1zM5 7h1v1h-1zM6 7h1v1h-1zM7 7h1v1h-1zM4 8h1v1h-1zM5 8h1v1h-1zM6 8h1v1h-1zM5 9h1v1h-1z" fill="#a4a294" shape-rendering="crispEdges"/></svg></div>
<div class="t" style="left:514.5px;top:399px;width:120px;text-align:center;">02</div>
<div class="cb dis" style="left:587px;top:380px"><svg width="13" height="13" viewBox="0 0 13 13"><path d="M9 3h1v1h-1zM8 4h1v1h-1zM9 4h1v1h-1zM3 5h1v1h-1zM7 5h1v1h-1zM8 5h1v1h-1zM9 5h1v1h-1zM3 6h1v1h-1zM4 6h1v1h-1zM6 6h1v1h-1zM7 6h1v1h-1zM8 6h1v1h-1zM3 7h1v1h-1zM4 7h1v1h-1zM5 7h1v1h-1zM6 7h1v1h-1zM7 7h1v1h-1zM4 8h1v1h-1zM5 8h1v1h-1zM6 8h1v1h-1zM5 9h1v1h-1z" fill="#a4a294" shape-rendering="crispEdges"/></svg></div>
<div class="t" style="left:534.5px;top:399px;width:120px;text-align:center;">03</div>
<div class="cb dis" style="left:607px;top:380px"><svg width="13" height="13" viewBox="0 0 13 13"><path d="M9 3h1v1h-1zM8 4h1v1h-1zM9 4h1v1h-1zM3 5h1v1h-1zM7 5h1v1h-1zM8 5h1v1h-1zM9 5h1v1h-1zM3 6h1v1h-1zM4 6h1v1h-1zM6 6h1v1h-1zM7 6h1v1h-1zM8 6h1v1h-1zM3 7h1v1h-1zM4 7h1v1h-1zM5 7h1v1h-1zM6 7h1v1h-1zM7 7h1v1h-1zM4 8h1v1h-1zM5 8h1v1h-1zM6 8h1v1h-1zM5 9h1v1h-1z" fill="#a4a294" shape-rendering="crispEdges"/></svg></div>
<div class="t" style="left:554.5px;top:399px;width:120px;text-align:center;">04</div>
<div class="cb dis" style="left:627px;top:380px"><svg width="13" height="13" viewBox="0 0 13 13"><path d="M9 3h1v1h-1zM8 4h1v1h-1zM9 4h1v1h-1zM3 5h1v1h-1zM7 5h1v1h-1zM8 5h1v1h-1zM9 5h1v1h-1zM3 6h1v1h-1zM4 6h1v1h-1zM6 6h1v1h-1zM7 6h1v1h-1zM8 6h1v1h-1zM3 7h1v1h-1zM4 7h1v1h-1zM5 7h1v1h-1zM6 7h1v1h-1zM7 7h1v1h-1zM4 8h1v1h-1zM5 8h1v1h-1zM6 8h1v1h-1zM5 9h1v1h-1z" fill="#a4a294" shape-rendering="crispEdges"/></svg></div>
<div class="t" style="left:574.5px;top:399px;width:120px;text-align:center;">05</div>
<div class="cb dis" style="left:647px;top:380px"><svg width="13" height="13" viewBox="0 0 13 13"><path d="M9 3h1v1h-1zM8 4h1v1h-1zM9 4h1v1h-1zM3 5h1v1h-1zM7 5h1v1h-1zM8 5h1v1h-1zM9 5h1v1h-1zM3 6h1v1h-1zM4 6h1v1h-1zM6 6h1v1h-1zM7 6h1v1h-1zM8 6h1v1h-1zM3 7h1v1h-1zM4 7h1v1h-1zM5 7h1v1h-1zM6 7h1v1h-1zM7 7h1v1h-1zM4 8h1v1h-1zM5 8h1v1h-1zM6 8h1v1h-1zM5 9h1v1h-1z" fill="#a4a294" shape-rendering="crispEdges"/></svg></div>
<div class="t" style="left:594.5px;top:399px;width:120px;text-align:center;">06</div>
<div class="cb dis" style="left:667px;top:380px"><svg width="13" height="13" viewBox="0 0 13 13"><path d="M9 3h1v1h-1zM8 4h1v1h-1zM9 4h1v1h-1zM3 5h1v1h-1zM7 5h1v1h-1zM8 5h1v1h-1zM9 5h1v1h-1zM3 6h1v1h-1zM4 6h1v1h-1zM6 6h1v1h-1zM7 6h1v1h-1zM8 6h1v1h-1zM3 7h1v1h-1zM4 7h1v1h-1zM5 7h1v1h-1zM6 7h1v1h-1zM7 7h1v1h-1zM4 8h1v1h-1zM5 8h1v1h-1zM6 8h1v1h-1zM5 9h1v1h-1z" fill="#a4a294" shape-rendering="crispEdges"/></svg></div>
<div class="t" style="left:614.5px;top:399px;width:120px;text-align:center;">07</div>
<div class="t" style="left:487.0px;top:420px;width:120px;text-align:center;">MIO</div>
<div class="t" style="left:577.0px;top:420px;width:120px;text-align:center;">CIO</div>
<div class="cb dis" style="left:527px;top:440px"><svg width="13" height="13" viewBox="0 0 13 13"><path d="M9 3h1v1h-1zM8 4h1v1h-1zM9 4h1v1h-1zM3 5h1v1h-1zM7 5h1v1h-1zM8 5h1v1h-1zM9 5h1v1h-1zM3 6h1v1h-1zM4 6h1v1h-1zM6 6h1v1h-1zM7 6h1v1h-1zM8 6h1v1h-1zM3 7h1v1h-1zM4 7h1v1h-1zM5 7h1v1h-1zM6 7h1v1h-1zM7 7h1v1h-1zM4 8h1v1h-1zM5 8h1v1h-1zM6 8h1v1h-1zM5 9h1v1h-1z" fill="#a4a294" shape-rendering="crispEdges"/></svg></div>
<div class="t" style="left:474.5px;top:459px;width:120px;text-align:center;">00</div>
<div class="cb dis" style="left:547px;top:440px"><svg width="13" height="13" viewBox="0 0 13 13"><path d="M9 3h1v1h-1zM8 4h1v1h-1zM9 4h1v1h-1zM3 5h1v1h-1zM7 5h1v1h-1zM8 5h1v1h-1zM9 5h1v1h-1zM3 6h1v1h-1zM4 6h1v1h-1zM6 6h1v1h-1zM7 6h1v1h-1zM8 6h1v1h-1zM3 7h1v1h-1zM4 7h1v1h-1zM5 7h1v1h-1zM6 7h1v1h-1zM7 7h1v1h-1zM4 8h1v1h-1zM5 8h1v1h-1zM6 8h1v1h-1zM5 9h1v1h-1z" fill="#a4a294" shape-rendering="crispEdges"/></svg></div>
<div class="t" style="left:494.5px;top:459px;width:120px;text-align:center;">01</div>
<div class="cb dis" style="left:567px;top:440px"><svg width="13" height="13" viewBox="0 0 13 13"><path d="M9 3h1v1h-1zM8 4h1v1h-1zM9 4h1v1h-1zM3 5h1v1h-1zM7 5h1v1h-1zM8 5h1v1h-1zM9 5h1v1h-1zM3 6h1v1h-1zM4 6h1v1h-1zM6 6h1v1h-1zM7 6h1v1h-1zM8 6h1v1h-1zM3 7h1v1h-1zM4 7h1v1h-1zM5 7h1v1h-1zM6 7h1v1h-1zM7 7h1v1h-1zM4 8h1v1h-1zM5 8h1v1h-1zM6 8h1v1h-1zM5 9h1v1h-1z" fill="#a4a294" shape-rendering="crispEdges"/></svg></div>
<div class="t" style="left:514.5px;top:459px;width:120px;text-align:center;">02</div>
<div class="cb dis" style="left:607px;top:440px"><svg width="13" height="13" viewBox="0 0 13 13"><path d="M9 3h1v1h-1zM8 4h1v1h-1zM9 4h1v1h-1zM3 5h1v1h-1zM7 5h1v1h-1zM8 5h1v1h-1zM9 5h1v1h-1zM3 6h1v1h-1zM4 6h1v1h-1zM6 6h1v1h-1zM7 6h1v1h-1zM8 6h1v1h-1zM3 7h1v1h-1zM4 7h1v1h-1zM5 7h1v1h-1zM6 7h1v1h-1zM7 7h1v1h-1zM4 8h1v1h-1zM5 8h1v1h-1zM6 8h1v1h-1zM5 9h1v1h-1z" fill="#a4a294" shape-rendering="crispEdges"/></svg></div>
<div class="t" style="left:554.5px;top:459px;width:120px;text-align:center;">00</div>
<div class="cb dis" style="left:627px;top:440px"><svg width="13" height="13" viewBox="0 0 13 13"><path d="M9 3h1v1h-1zM8 4h1v1h-1zM9 4h1v1h-1zM3 5h1v1h-1zM7 5h1v1h-1zM8 5h1v1h-1zM9 5h1v1h-1zM3 6h1v1h-1zM4 6h1v1h-1zM6 6h1v1h-1zM7 6h1v1h-1zM8 6h1v1h-1zM3 7h1v1h-1zM4 7h1v1h-1zM5 7h1v1h-1zM6 7h1v1h-1zM7 7h1v1h-1zM4 8h1v1h-1zM5 8h1v1h-1zM6 8h1v1h-1zM5 9h1v1h-1z" fill="#a4a294" shape-rendering="crispEdges"/></svg></div>
<div class="t" style="left:574.5px;top:459px;width:120px;text-align:center;">01</div>
<div class="cb dis" style="left:647px;top:440px"><svg width="13" height="13" viewBox="0 0 13 13"><path d="M9 3h1v1h-1zM8 4h1v1h-1zM9 4h1v1h-1zM3 5h1v1h-1zM7 5h1v1h-1zM8 5h1v1h-1zM9 5h1v1h-1zM3 6h1v1h-1zM4 6h1v1h-1zM6 6h1v1h-1zM7 6h1v1h-1zM8 6h1v1h-1zM3 7h1v1h-1zM4 7h1v1h-1zM5 7h1v1h-1zM6 7h1v1h-1zM7 7h1v1h-1zM4 8h1v1h-1zM5 8h1v1h-1zM6 8h1v1h-1zM5 9h1v1h-1z" fill="#a4a294" shape-rendering="crispEdges"/></svg></div>
<div class="t" style="left:594.5px;top:459px;width:120px;text-align:center;">02</div>
<div class="cb dis" style="left:667px;top:440px"><svg width="13" height="13" viewBox="0 0 13 13"><path d="M9 3h1v1h-1zM8 4h1v1h-1zM9 4h1v1h-1zM3 5h1v1h-1zM7 5h1v1h-1zM8 5h1v1h-1zM9 5h1v1h-1zM3 6h1v1h-1zM4 6h1v1h-1zM6 6h1v1h-1zM7 6h1v1h-1zM8 6h1v1h-1zM3 7h1v1h-1zM4 7h1v1h-1zM5 7h1v1h-1zM6 7h1v1h-1zM7 7h1v1h-1zM4 8h1v1h-1zM5 8h1v1h-1zM6 8h1v1h-1zM5 9h1v1h-1z" fill="#a4a294" shape-rendering="crispEdges"/></svg></div>
<div class="t" style="left:614.5px;top:459px;width:120px;text-align:center;">03</div>
<div class="gw" style="left:518px;top:501px;width:175px;height:82px"></div>
<div class="gg" style="left:517px;top:500px;width:175px;height:82px"></div>
<div class="gt" style="left:526px;top:496px;width:81px;padding-left:1px">Analog Outputs</div>
<div class="t" style="left:488.5px;top:528px;width:120px;text-align:center;">DAC0</div>
<div class="t" style="left:576.0px;top:528px;width:120px;text-align:center;">DAC1</div>
<div style="left:525px;top:543px;width:71px;height:19px;background:#fffffc"><div style="left:0;top:0;width:71px;height:1px;background:#8c8a80"></div><div style="left:0;top:0;width:1px;height:19px;background:#8c8a80"></div><div style="left:1px;top:1px;width:69px;height:1px;background:#5a574c"></div><div style="left:1px;top:1px;width:1px;height:17px;background:#5a574c"></div><div style="left:1px;top:18px;width:70px;height:1px;background:#fff"></div><div style="left:70px;top:0;width:1px;height:19px;background:#fff"></div><div class="sv" style="left:2px;top:2px;color:#000">0.000</div><div style="left:54px;top:2px;width:16px;height:16px;background:#eeecdf"></div><div style="left:54px;top:9px;width:16px;height:1px;background:#6e6c62"></div><div style="left:54px;top:17px;width:16px;height:1px;background:#6e6c62"></div><div style="left:69px;top:2px;width:1px;height:16px;background:#6e6c62"></div><div style="left:54px;top:2px;width:15px;height:1px;background:#f6f5ec"></div><div style="left:62px;top:5px;width:1px;height:1px;background:#000"></div><div style="left:61px;top:6px;width:3px;height:1px;background:#000"></div><div style="left:61px;top:13px;width:3px;height:1px;background:#000"></div><div style="left:62px;top:14px;width:1px;height:1px;background:#000"></div></div>
<div style="left:613px;top:543px;width:71px;height:19px;background:#fffffc"><div style="left:0;top:0;width:71px;height:1px;background:#8c8a80"></div><div style="left:0;top:0;width:1px;height:19px;background:#8c8a80"></div><div style="left:1px;top:1px;width:69px;height:1px;background:#5a574c"></div><div style="left:1px;top:1px;width:1px;height:17px;background:#5a574c"></div><div style="left:1px;top:18px;width:70px;height:1px;background:#fff"></div><div style="left:70px;top:0;width:1px;height:19px;background:#fff"></div><div class="sv" style="left:2px;top:2px;color:#000">0.000</div><div style="left:54px;top:2px;width:16px;height:16px;background:#eeecdf"></div><div style="left:54px;top:9px;width:16px;height:1px;background:#6e6c62"></div><div style="left:54px;top:17px;width:16px;height:1px;background:#6e6c62"></div><div style="left:69px;top:2px;width:1px;height:16px;background:#6e6c62"></div><div style="left:54px;top:2px;width:15px;height:1px;background:#f6f5ec"></div><div style="left:62px;top:5px;width:1px;height:1px;background:#000"></div><div style="left:61px;top:6px;width:3px;height:1px;background:#000"></div><div style="left:61px;top:13px;width:3px;height:1px;background:#000"></div><div style="left:62px;top:14px;width:1px;height:1px;background:#000"></div></div>
<div style="left:615px;top:545px;width:1px;height:14px;background:#000"></div>
<div style="left:614px;top:545px;width:3px;height:1px;background:#000"></div>
</body></html>
